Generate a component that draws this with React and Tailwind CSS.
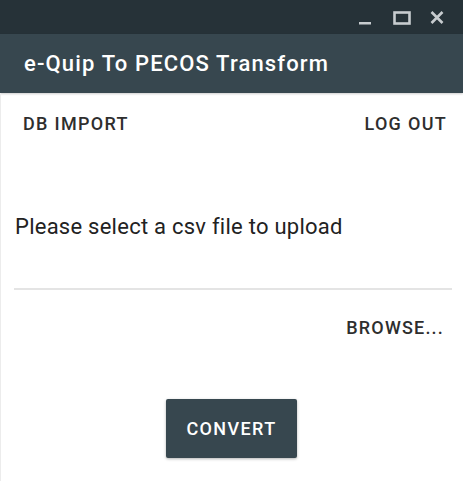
import React from 'react';

function WindowControls() {
  return (
    <div className="flex items-center h-full pr-[19px] text-[#c7cccf]">
      <svg width="14" height="14" viewBox="0 0 14 14" className="mt-[3px]">
        <rect x="1" y="10" width="12" height="2.5" fill="currentColor" />
      </svg>
      <svg width="18" height="14" viewBox="0 0 18 14" className="ml-[21px] mt-[1px]">
        <rect x="1.5" y="1.5" width="15" height="11" fill="none" stroke="currentColor" strokeWidth="2.6" />
      </svg>
      <svg width="14" height="13" viewBox="0 0 14 13" className="ml-[19px]">
        <path d="M1.5 1 L12.5 12 M12.5 1 L1.5 12" stroke="currentColor" strokeWidth="2.6" />
      </svg>
    </div>
  );
}

export default function App() {
  return (
    <div
      className="w-[463px] h-[481px] flex flex-col bg-white overflow-hidden"
      style={{ fontFamily: 'Roboto, "Liberation Sans", sans-serif' }}
    >
      <div className="h-[34px] bg-[#263238] flex justify-end shrink-0">
        <WindowControls />
      </div>
      <header className="h-[59px] bg-[#37474f] flex items-center px-[24px] shrink-0 shadow-[0_1px_2px_rgba(0,0,0,0.2)]">
        <h1 className="text-[22px] leading-[28px] font-medium text-white tracking-[1.15px]">e-Quip To PECOS Transform</h1>
      </header>
      <main className="flex-1 flex flex-col border-l border-[#ececec]">
        <div className="flex justify-between items-center pl-[22px] pr-[16px] pt-[19px]">
          <button className="text-[18px] leading-[24px] font-medium text-[#2e2e2e] tracking-[1.3px] uppercase">DB Import</button>
          <button className="text-[18px] leading-[24px] font-medium text-[#2e2e2e] tracking-[1.3px] uppercase">Log Out</button>
        </div>
        <p className="mt-[76px] pl-[14px] text-[22px] leading-[30px] text-[#222] tracking-[0.25px]">Please select a csv file to upload</p>
        <div className="mt-[46px] ml-[13px] mr-[11px] h-[2px] bg-[#e4e4e4]" />
        <div className="flex justify-end pr-[19px] mt-[26px]">
          <button className="text-[18px] leading-[24px] font-medium text-[#2e2e2e] tracking-[1.2px] uppercase">Browse...</button>
        </div>
        <div className="flex justify-center mt-[59px]">
          <button className="w-[131px] h-[59px] bg-[#37474f] rounded-[2px] text-white text-[18px] font-medium tracking-[1.4px] shadow-[0_1px_3px_rgba(0,0,0,0.3)] ml-[-1px]">
            CONVERT
          </button>
        </div>
      </main>
    </div>
  );
}
